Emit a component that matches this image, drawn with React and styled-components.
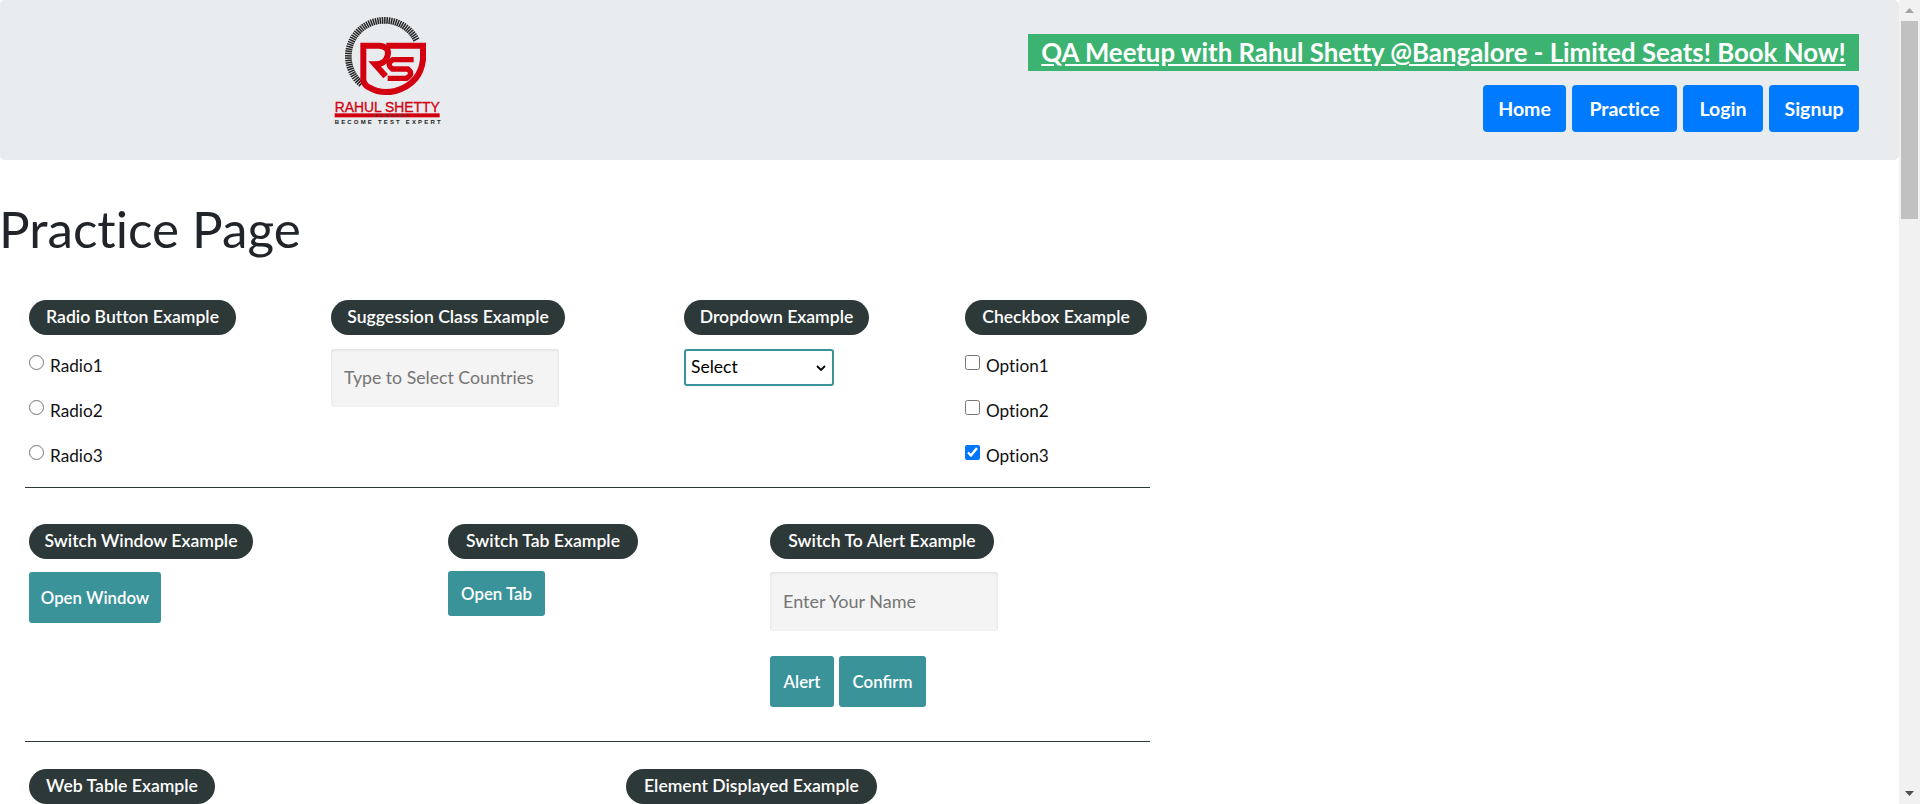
import React from "react";
import styled, { createGlobalStyle } from "styled-components";

const FONT = `"Lato", "Noto Sans", sans-serif`;

const CHEVRON = `url("data:image/svg+xml,%3Csvg xmlns='http://www.w3.org/2000/svg' width='10' height='6' viewBox='0 0 10 6'%3E%3Cpath d='M1 1l4 4 4-4' fill='none' stroke='%23000' stroke-width='1.8'/%3E%3C/svg%3E")`;

const GlobalStyle = createGlobalStyle`
  html, body {
    margin: 0;
    height: 100%;
    overflow: hidden;
    background: #fff;
  }
  * {
    box-sizing: border-box;
  }
`;

const Shell = styled.div`
  display: flex;
  height: 804px;
  overflow: hidden;
  font-family: ${FONT};
  font-variant-ligatures: none;
  color: #212529;
`;

const Page = styled.main`
  flex: 1;
  min-width: 0;
  overflow: hidden;
`;

const ScrollRail = styled.aside`
  width: 21px;
  flex: none;
  display: flex;
  flex-direction: column;
  align-items: center;
  padding: 0 1px 0 1px;
  background: #f1f1f1;
`;

const ScrollArrow = styled.svg`
  flex: none;
  width: 19px;
  height: 21px;
`;

const ScrollThumb = styled.div`
  width: 17px;
  height: 198px;
  background: #c1c1c1;
`;

const ScrollGap = styled.div`
  flex: 1;
`;

const Header = styled.header`
  height: 160px;
  display: flex;
  justify-content: space-between;
  align-items: flex-start;
  padding: 17px 40px 0 332px;
  background: #e9ecef;
  border-radius: 5px;
`;

const LogoMark = styled.svg`
  display: block;
  width: 110px;
  height: 110px;
  overflow: visible;
`;

const HeaderRight = styled.div`
  display: flex;
  flex-direction: column;
  align-items: flex-end;
  padding-top: 17px;
`;

const Banner = styled.a`
  display: block;
  width: 831px;
  height: 37px;
  background: #3cb371;
  color: #fff;
  font-size: 25.8px;
  font-weight: 700;
  line-height: 37px;
  text-align: center;
  text-decoration: underline;
  white-space: nowrap;
`;

const Nav = styled.nav`
  display: flex;
  gap: 6px;
  margin-top: 14px;
`;

const NavButton = styled.a`
  display: flex;
  align-items: center;
  justify-content: center;
  width: ${(props) => props.$w}px;
  height: 47px;
  background: #007bff;
  border-radius: 4px;
  color: #fff;
  font-size: 19.5px;
  font-weight: 700;
`;

const Title = styled.h1`
  margin: 39px 0 43px -1px;
  font-size: 51.2px;
  font-weight: 400;
  line-height: 58px;
  color: #212529;
`;

const Section = styled.section`
  width: 1125px;
  margin-left: 25px;
  padding: 0 0 ${(props) => props.$bottom}px 4px;
  display: grid;
  grid-template-columns: ${(props) => props.$cols};
  align-items: start;
`;

const Rule = styled.hr`
  width: 1125px;
  height: 1px;
  margin: 0 0 ${(props) => props.$bottom}px 25px;
  border: 0;
  background: #2d3839;
`;

const Pill = styled.div`
  width: ${(props) => props.$w}px;
  height: 35px;
  background: #2d3839;
  border-radius: 18px;
  color: #fff;
  font-size: 17.6px;
  font-weight: 600;
  line-height: 33px;
  text-align: center;
  white-space: nowrap;
`;

const Cell = styled.div`
  display: flex;
  flex-direction: column;
  align-items: flex-start;
`;

const OptionList = styled.div`
  display: flex;
  flex-direction: column;
  margin-top: 7px;
`;

const OptionLabel = styled.label`
  display: flex;
  align-items: center;
  height: 45px;
  padding-top: 2px;
  font-size: 17.2px;
  color: #111;

  input {
    margin: 0 6px 6px 0;
    width: 15px;
    height: 15px;
  }
`;

const TextField = styled.input`
  width: ${(props) => props.$w}px;
  height: ${(props) => props.$h}px;
  margin-top: ${(props) => props.$top}px;
  padding: 0 13px 2px;
  background: #f4f4f4;
  border: 0;
  border-radius: 3px;
  box-shadow: inset 0 1px 3px rgba(0, 0, 0, 0.1);
  font-family: ${FONT};
  font-size: ${(props) => props.$size}px;
  color: #333;

  &::placeholder {
    color: #757575;
    opacity: 1;
  }
`;

const SelectBox = styled.select`
  appearance: none;
  width: 150px;
  height: 37px;
  margin-top: 14px;
  padding: 0 20px 2px 5px;
  background: #fff ${CHEVRON} no-repeat right 6px center;
  border: 2px solid #3a9399;
  border-radius: 3px;
  font-family: ${FONT};
  font-size: 17.5px;
  color: #000;
`;

const ActionButton = styled.button`
  width: ${(props) => props.$w}px;
  height: ${(props) => props.$h}px;
  margin-top: ${(props) => props.$top || 0}px;
  padding: 0;
  background: #3a9399;
  border: 0;
  border-radius: 3px;
  color: #fff;
  font-family: ${FONT};
  font-size: 16.8px;
  font-weight: 600;
`;

const ButtonRow = styled.div`
  display: flex;
  gap: 5px;
  margin-top: 25px;
`;

const Logo = () => {
  const ticks = [];
  for (let a = -28; a >= -232; a -= 3.6) {
    const r = (a * Math.PI) / 180;
    ticks.push(
      <line
        key={a}
        x1={252 + 98 * Math.cos(r)}
        y1={168 + 98 * Math.sin(r)}
        x2={252 + 118 * Math.cos(r)}
        y2={168 + 118 * Math.sin(r)}
        stroke="#222"
        strokeWidth="4.5"
      />
    );
  }
  return (
    <LogoMark viewBox="95 50 330 330">
      {ticks}
      <path
        d="M258 136H368V178Q360 250 285 272Q240 282 208 262Q192 255 189 240V136H238Q268 140 262 165Q255 192 224 192L256 228"
        fill="none"
        stroke="#d3000f"
        strokeWidth="18"
      />
      <path
        d="M340 178H278Q256 190 276 206H322Q342 220 318 234H262"
        fill="none"
        stroke="#d3000f"
        strokeWidth="16"
      />
      <text x="103" y="334" textLength="315" lengthAdjust="spacingAndGlyphs" fontFamily="Liberation Sans" fontSize="44" fill="#d3000f" stroke="#d3000f" strokeWidth="1">
        RAHUL SHETTY
      </text>
      <rect x="103" y="339" width="315" height="12" fill="#d3000f" />
      <text x="222" y="351" textLength="100" fontFamily="Liberation Sans" fontSize="11" fontWeight="700" fill="#444">
        ACADEMY
      </text>
      <text x="103" y="370" textLength="318" fontFamily="Liberation Sans" fontSize="18" fontWeight="700" fill="#222">
        BECOME TEST EXPERT
      </text>
    </LogoMark>
  );
};

export default function App() {
  return (
    <Shell>
      <GlobalStyle />
      <Page>
        <Header>
          <Logo />
          <HeaderRight>
            <Banner href="#">QA Meetup with Rahul Shetty @Bangalore - Limited Seats! Book Now!</Banner>
            <Nav>
              <NavButton $w={83}>Home</NavButton>
              <NavButton $w={105}>Practice</NavButton>
              <NavButton $w={80}>Login</NavButton>
              <NavButton $w={90}>Signup</NavButton>
            </Nav>
          </HeaderRight>
        </Header>
        <Title>Practice Page</Title>

        <Section $cols="302px 353px 281px 1fr" $bottom={10}>
          <Cell>
            <Pill $w={207}>Radio Button Example</Pill>
            <OptionList>
              <OptionLabel><input type="radio" name="radio" />Radio1</OptionLabel>
              <OptionLabel><input type="radio" name="radio" />Radio2</OptionLabel>
              <OptionLabel><input type="radio" name="radio" />Radio3</OptionLabel>
            </OptionList>
          </Cell>
          <Cell>
            <Pill $w={234}>Suggession Class Example</Pill>
            <TextField $w={228} $h={58} $top={14} $size={17.7} placeholder="Type to Select Countries" />
          </Cell>
          <Cell>
            <Pill $w={185}>Dropdown Example</Pill>
            <SelectBox defaultValue="Select">
              <option>Select</option>
              <option>Option1</option>
              <option>Option2</option>
              <option>Option3</option>
            </SelectBox>
          </Cell>
          <Cell>
            <Pill $w={182}>Checkbox Example</Pill>
            <OptionList>
              <OptionLabel><input type="checkbox" />Option1</OptionLabel>
              <OptionLabel><input type="checkbox" />Option2</OptionLabel>
              <OptionLabel><input type="checkbox" defaultChecked />Option3</OptionLabel>
            </OptionList>
          </Cell>
        </Section>
        <Rule $bottom={36} />

        <Section $cols="419px 322px 1fr" $bottom={34}>
          <Cell>
            <Pill $w={224}>Switch Window Example</Pill>
            <ActionButton $w={132} $h={51} $top={13}>Open Window</ActionButton>
          </Cell>
          <Cell>
            <Pill $w={190}>Switch Tab Example</Pill>
            <ActionButton $w={97} $h={45} $top={12}>Open Tab</ActionButton>
          </Cell>
          <Cell>
            <Pill $w={224}>Switch To Alert Example</Pill>
            <TextField $w={228} $h={59} $top={13} $size={18} placeholder="Enter Your Name" />
            <ButtonRow>
              <ActionButton $w={64} $h={51}>Alert</ActionButton>
              <ActionButton $w={87} $h={51}>Confirm</ActionButton>
            </ButtonRow>
          </Cell>
        </Section>
        <Rule $bottom={27} />

        <Section $cols="597px 1fr" $bottom={0}>
          <Cell>
            <Pill $w={186}>Web Table Example</Pill>
          </Cell>
          <Cell>
            <Pill $w={251}>Element Displayed Example</Pill>
          </Cell>
        </Section>
      </Page>
      <ScrollRail>
        <ScrollArrow viewBox="0 0 19 21">
          <path d="M9.5 8L14 13H5z" fill="#a3a3a3" />
        </ScrollArrow>
        <ScrollThumb />
        <ScrollGap />
        <ScrollArrow viewBox="0 0 19 21">
          <path d="M9.5 13L14 8H5z" fill="#505050" />
        </ScrollArrow>
      </ScrollRail>
    </Shell>
  );
}
